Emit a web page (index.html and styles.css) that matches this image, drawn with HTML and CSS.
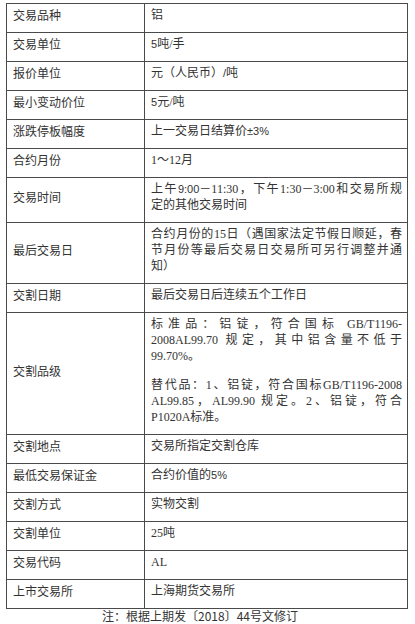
FILE: index.html
```html
<!DOCTYPE html>
<html lang="zh-CN">
<head>
<meta charset="utf-8">
<link rel="stylesheet" href="styles.css">
</head>
<body>
<table class="spec">
  <colgroup><col class="c1"><col class="c2"></colgroup>
  <tr><td class="k">交易品种</td><td class="v">铝</td></tr>
  <tr><td class="k">交易单位</td><td class="v"><span class="s">5</span>吨/手</td></tr>
  <tr><td class="k">报价单位</td><td class="v">元（人民币）<span class="s">/</span>吨</td></tr>
  <tr><td class="k">最小变动价位</td><td class="v"><span class="s">5</span>元/吨</td></tr>
  <tr><td class="k">涨跌停板幅度</td><td class="v">上一交易日结算价<span class="s">±3%</span></td></tr>
  <tr><td class="k">合约月份</td><td class="v">1～12月</td></tr>
  <tr><td class="k">交易时间</td><td class="v"><span class="ln">上午<span class="s">9:00</span>－11:30，下午1:30－3:00和交易所规</span><span class="ll">定的其他交易时间</span></td></tr>
  <tr><td class="k">最后交易日</td><td class="v"><span class="ln">合约月份的15日（遇国家法定节假日顺延，春</span><span class="ln">节月份等最后交易日交易所可另行调整并通</span><span class="ll">知）</span></td></tr>
  <tr><td class="k">交割日期</td><td class="v">最后交易日后连续五个工作日</td></tr>
  <tr><td class="k">交割品级</td><td class="v">
    <p class="para"><span class="ln">标准品：铝锭，符合国标 GB/T1196-</span><span class="ln">2008AL99.70 规定，其中铝含量不低于</span><span class="ll">99.70%。</span></p>
    <p class="para last"><span class="ln">替代品：1、铝锭，符合国标GB/T1196-2008</span><span class="ln">AL99.85，AL99.90 规定。2、铝锭，符合</span><span class="ll">P1020A标准。</span></p>
  </td></tr>
  <tr><td class="k">交割地点</td><td class="v">交易所指定交割仓库</td></tr>
  <tr><td class="k">最低交易保证金</td><td class="v">合约价值的<span class="s">5%</span></td></tr>
  <tr><td class="k">交割方式</td><td class="v">实物交割</td></tr>
  <tr><td class="k">交割单位</td><td class="v">25吨</td></tr>
  <tr><td class="k">交易代码</td><td class="v">AL</td></tr>
  <tr><td class="k">上市交易所</td><td class="v">上海期货交易所</td></tr>
</table>
<p class="note">注：根据上期发〔2018〕44号文修订</p>
</body>
</html>
```
FILE: styles.css
```css
html, body {
  margin: 0;
  padding: 0;
  background: #ffffff;
}
body {
  width: 415px;
  color: #333333;
  font-family: "Noto Sans CJK SC", sans-serif;
  font-size: 12px;
}
.spec {
  border-collapse: collapse;
  margin: 3px 0 0 6px;
  width: 401px;
  table-layout: fixed;
}
.c1 { width: 138px; }
.c2 { width: 263px; }
.spec td {
  border: 1px solid #4a4a4a;
  padding: 3px 5px 9px 6px;
  line-height: 16px;
  vertical-align: middle;
}
.spec td.v {
  font-family: "Liberation Serif", "Noto Sans CJK SC", serif;
  vertical-align: top;
}
.s {
  font-family: "Liberation Sans", "Noto Sans CJK SC", sans-serif;
  font-size: 11px;
}
.ln {
  display: block;
  text-align: justify;
  text-align-last: justify;
  white-space: nowrap;
}
.ll {
  display: block;
  white-space: nowrap;
}
.para {
  margin: 0 0 13px 0;
}
.para.last {
  margin: 0;
}
.note {
  margin: 0;
  text-align: center;
  width: 400px;
  line-height: 14px;
  font-size: 12px;
  color: #333333;
}
```
